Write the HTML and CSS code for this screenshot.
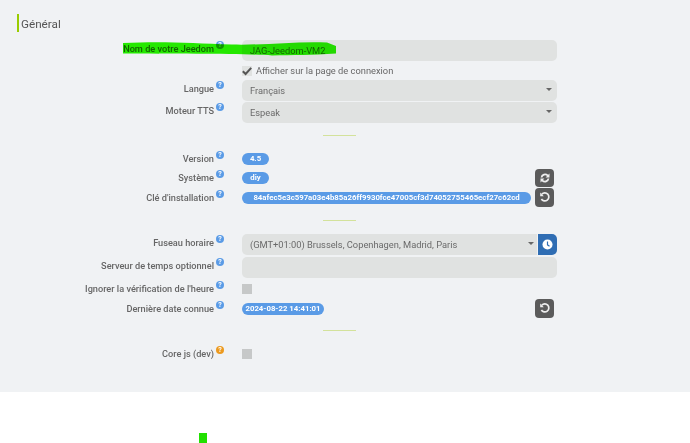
FILE: index.html
```html
<!DOCTYPE html>
<html lang="fr">
<head>
<meta charset="utf-8">
<title>Général</title>
<link rel="stylesheet" href="styles.css">
</head>
<body>
<main class="panel">
  <h2 class="title">Général</h2>

  <div class="row row-input">
    <label class="label">Nom de votre Jeedom<span class="help">?</span></label>
    <div class="control"><div class="field">JAG-Jeedom-VM2</div></div>
  </div>
  <div class="row row-check">
    <div class="label"></div>
    <div class="control"><span class="checkbox checked"><svg viewBox="0 0 10 10" width="10" height="10"><path d="M.8 5.2 3.6 8 9.2 1.8" fill="none" stroke="#555" stroke-width="2"/></svg></span><span class="check-text">Afficher sur la page de connexion</span></div>
  </div>
  <div class="row row-select">
    <label class="label">Langue<span class="help">?</span></label>
    <div class="control"><div class="field select">Français</div></div>
  </div>
  <div class="row row-select">
    <label class="label">Moteur TTS<span class="help">?</span></label>
    <div class="control"><div class="field select">Espeak</div></div>
  </div>

  <div class="sep sep-1"></div>

  <div class="row row-badge">
    <label class="label">Version<span class="help">?</span></label>
    <div class="control"><span class="badge short">4.5</span></div>
  </div>
  <div class="row row-badge">
    <label class="label">Système<span class="help">?</span></label>
    <div class="control"><span class="badge short">diy</span><button class="btn" type="button"><svg viewBox="0 0 12 12" width="12" height="12"><path d="M1.6 5.4A4.5 4.5 0 0 1 9.2 2.8L10.5 1.5V5.4H6.6L8 4A2.8 2.8 0 0 0 3.4 5.4ZM10.4 6.6A4.5 4.5 0 0 1 2.8 9.2L1.5 10.5V6.6H5.4L4 8A2.8 2.8 0 0 0 8.6 6.6Z" fill="#eee"/></svg></button></div>
  </div>
  <div class="row row-badge">
    <label class="label">Clé d'installation<span class="help">?</span></label>
    <div class="control"><span class="badge key">84afec5e3c597a03e4b85a26ff9930fce47005cf3d74052755465ecf27c62cd</span><button class="btn" type="button"><svg viewBox="0 0 12 12" width="12" height="12"><path d="M2.8 3.3A4 4 0 1 1 2.4 8" fill="none" stroke="#eee" stroke-width="1.7"/><path d="M1.2 1.6V5.2H4.8Z" fill="#eee"/></svg></button></div>
  </div>

  <div class="sep sep-2"></div>

  <div class="row row-select">
    <label class="label">Fuseau horaire<span class="help">?</span></label>
    <div class="control"><div class="field select joined">(GMT+01:00) Brussels, Copenhagen, Madrid, Paris</div><button class="addon" type="button"><svg viewBox="0 0 12 12" width="11" height="11"><circle cx="6" cy="6" r="5.5" fill="#fff"/><path d="M6 2.8V6.4L8.2 7.8" fill="none" stroke="#2f6db3" stroke-width="1.3"/></svg></button></div>
  </div>
  <div class="row row-select tight">
    <label class="label">Serveur de temps optionnel<span class="help">?</span></label>
    <div class="control"><div class="field"></div></div>
  </div>
  <div class="row row-plain">
    <label class="label">Ignorer la vérification de l'heure<span class="help">?</span></label>
    <div class="control"><span class="checkbox"></span></div>
  </div>
  <div class="row row-date">
    <label class="label">Dernière date connue<span class="help">?</span></label>
    <div class="control"><span class="badge date">2024-08-22 14:41:01</span><button class="btn" type="button"><svg viewBox="0 0 12 12" width="12" height="12"><path d="M2.8 3.3A4 4 0 1 1 2.4 8" fill="none" stroke="#eee" stroke-width="1.7"/><path d="M1.2 1.6V5.2H4.8Z" fill="#eee"/></svg></button></div>
  </div>

  <div class="sep sep-3"></div>

  <div class="row row-plain">
    <label class="label">Core js (dev)<span class="help warn">?</span></label>
    <div class="control"><span class="checkbox"></span></div>
  </div>

  <svg class="scribble" width="216" height="16" viewBox="0 0 216 16"><path d="M1 2C40 0 70 2 110 3.500C140 4.500 175 0 205 1.500L214 5V12.500C190 14 170 14 150 14.500C125 12.500 60 13 1 12.500Z" fill="#27f500"/></svg>
</main>
<div class="mark"></div>
</body>
</html>
```
FILE: styles.css
```css
* { box-sizing: border-box; }
html, body { margin: 0; padding: 0; background: #fff; }
body { font-family: Roboto, "Liberation Sans", sans-serif; font-size: 9.3px; color: #666; width: 690px; height: 443px; overflow: hidden; position: relative; }
.panel { position: relative; height: 392px; background: #f0f2f4; padding-top: 14px; }
.title { margin: 0 0 0 17px; height: 18px; padding-left: 2px; border-left: 2px solid #9c0; font-size: 11.7px; line-height: 20px; font-weight: 400; color: #555; }
.row { display: flex; align-items: center; }
.row-input { height: 21px; margin-top: 8px; }
.row-check { height: 15px; margin-top: 2px; }
.row-select { height: 21px; margin-top: 1px; }
.row-check + .row-select { margin-top: 2px; }
.row-select.tight { margin-top: 2px; }
.row-badge { height: 19.5px; align-items: stretch; }
.row-plain { height: 12px; margin-top: 5px; }
.row-date { height: 20px; margin-top: 4px; align-items: stretch; }
.label { width: 226px; flex: none; padding-right: 12px; text-align: right; position: relative; font-size: 9.2px; font-weight: 500; line-height: 12px; color: #666; white-space: nowrap; }
.row-input .label, .row-select .label { padding-bottom: 3px; }
.row-badge .label, .row-date .label { align-self: center; }
.help { position: absolute; right: 2px; top: -2px; width: 8px; height: 8px; border-radius: 50%; background: #5a9be6; color: #fff; font-size: 7px; line-height: 8px; font-weight: 700; text-align: center; }
.help.warn { background: #ec9a1f; }
.control { margin-left: 16px; width: 315px; display: flex; align-items: center; position: relative; }
.field { flex: 1; height: 21px; line-height: 21px; background: #e0e2e1; border-radius: 5px; padding-left: 8px; color: #6a6a6a; position: relative; }
.select::after { content: ""; position: absolute; right: 5px; top: 8px; border: 3px solid transparent; border-top: 3.5px solid #666; border-bottom: 0; }
.joined { border-radius: 5px 0 0 5px; }
.joined::after { right: 3px; }
.addon { flex: none; width: 19px; height: 21px; margin-left: 1px; border: 0; padding: 0; background: #2f6db3; border-radius: 0 5px 5px 0; display: flex; align-items: center; justify-content: center; }
.checkbox { width: 10px; height: 10px; background: #c6c8c8; display: block; flex: none; }
.checkbox.checked { background: #e0e2e1; margin-right: 4px; }
.checkbox svg { display: block; }
.check-text { color: #666; }
.badge { display: inline-block; height: 12px; line-height: 12px; background: #5a9be6; color: #fff; border-radius: 6px; font-size: 7.8px; font-weight: 700; text-align: center; white-space: nowrap; }
.short { width: 27px; }
.key { width: 289px; }
.date { width: 82px; }
.btn { position: absolute; left: 293px; top: 0; width: 19px; height: 18.5px; border: 0; padding: 0; border-radius: 4px; background: #5b5b5b; display: flex; align-items: center; justify-content: center; }
.sep { width: 33px; height: 1px; background: #d3e29b; margin-left: 323px; }
.sep-1 { margin-top: 12px; margin-bottom: 13px; }
.sep-2 { margin-top: 12.5px; margin-bottom: 13px; }
.sep-3 { margin-top: 11px; margin-bottom: 17px; }
.scribble { position: absolute; left: 122px; top: 41px; mix-blend-mode: multiply; }
.mark { position: absolute; left: 199px; top: 433px; width: 8px; height: 10px; background: #22e000; }
```
